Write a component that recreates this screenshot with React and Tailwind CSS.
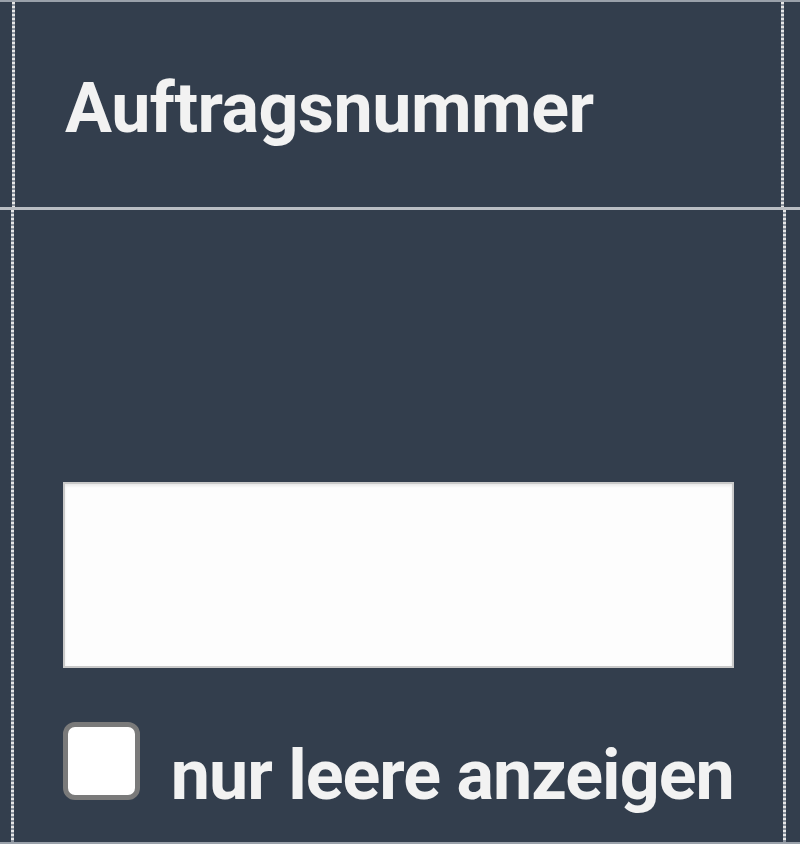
import { useState } from 'react'

// Table header cell with a filter input, upscaled
function VLine() {
  return <div className="w-[3px] shrink-0 bg-[repeating-linear-gradient(to_bottom,#e6e6e6_0px,#e6e6e6_2px,#8a929d_2px,#8a929d_4px)]" />
}

export default function App() {
  const [onlyEmpty, setOnlyEmpty] = useState(false)

  return (
    <div className="w-[800px] h-[844px] bg-[#333e4d] flex flex-col font-['Roboto',sans-serif] text-[#f2f2f2]">
      <div className="h-[2px] bg-[#9aa1aa]" />

      {/* Header */}
      <div className="flex h-[205px]">
        <div className="w-[12px]" />
        <VLine />
        <div className="flex-1 pl-[50px] pt-[66px]">
          <span className="block text-[70px] font-bold leading-[80px] tracking-[-0.5px]">Auftragsnummer</span>
        </div>
        <VLine />
        <div className="w-[16px]" />
      </div>

      <div className="h-[3px] bg-[#b9bdc3]" />

      {/* Filter */}
      <div className="flex flex-1">
        <div className="w-[12px]" />
        <VLine />
        <div className="flex-1 flex flex-col justify-end px-[49px] pb-[42px]">
          <input
            type="text"
            className="h-[186px] w-full bg-[#fdfdfd] border-2 border-[#c9c9c9] shadow-[inset_0_2px_3px_rgba(0,0,0,0.08)] outline-none"
          />
          <label className="flex items-end gap-[31px] mt-[54px]">
            <input
              type="checkbox"
              checked={onlyEmpty}
              onChange={(e) => setOnlyEmpty(e.target.checked)}
              className="appearance-none w-[77px] h-[78px] shrink-0 bg-white border-[5px] border-[#7a7a7a] rounded-[12px]"
            />
            <span className="text-[70px] font-bold leading-[50px] tracking-[-1px] whitespace-nowrap">nur leere anzeigen</span>
          </label>
        </div>
        <VLine />
        <div className="w-[16px]" />
      </div>

      <div className="h-[2px] bg-[#9aa1aa]" />
    </div>
  )
}
